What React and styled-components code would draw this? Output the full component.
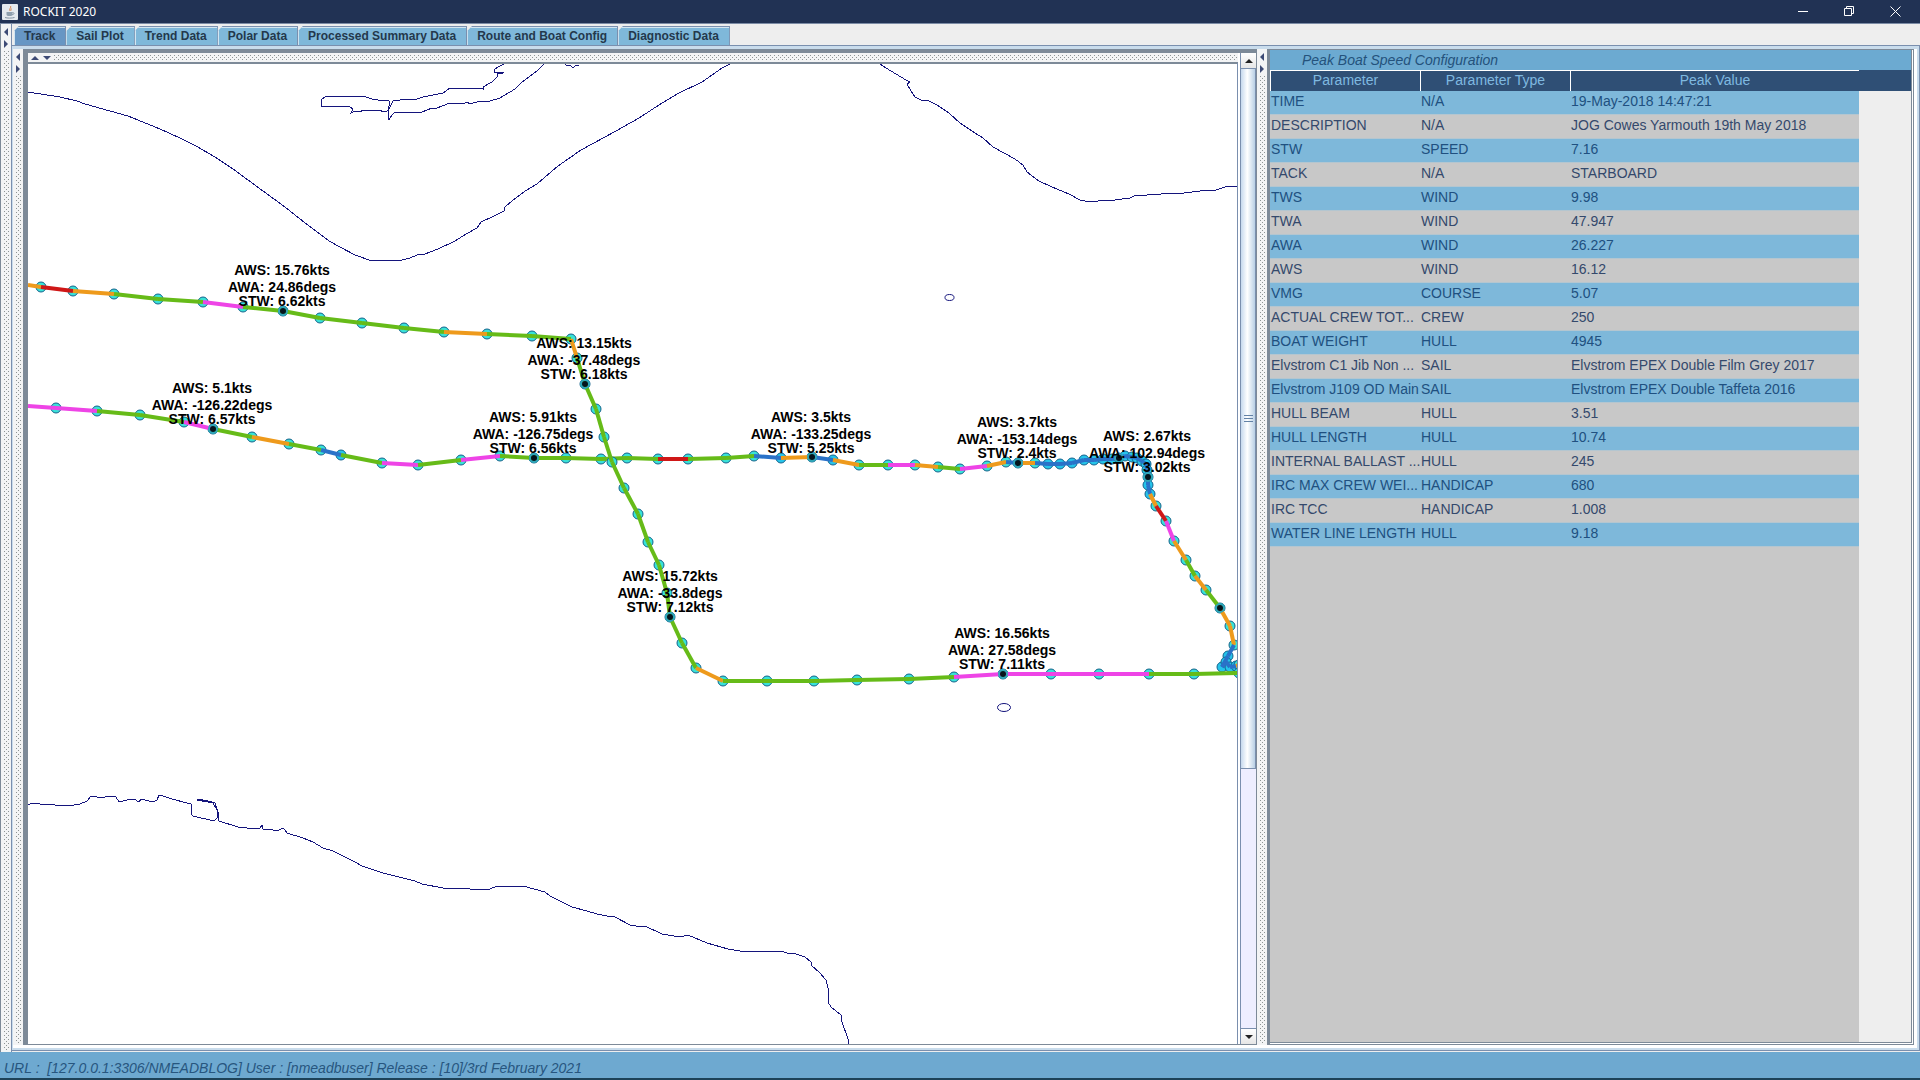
import React, { useState } from "react";
import styled, { createGlobalStyle, css } from "styled-components";

const GlobalStyle = createGlobalStyle`
  * { box-sizing: border-box; }
  body { margin: 0; background: #eeeeee; font-family: "Liberation Sans", Arial, sans-serif; }
  button { margin: 0; padding: 0; border: 0; background: none; font: inherit; color: inherit; }
`;

const EDGE = "#7d8a98";
const STEEL = "#7a8fae";

const Window = styled.div`
  display: flex;
  flex-direction: column;
  height: 100vh;
  min-height: 600px;
  overflow: hidden;
`;

const TitleBar = styled.header`
  display: flex;
  align-items: center;
  height: 24px;
  flex: none;
  padding: 0 2px;
  background: #213254;
  border-bottom: 1px solid #7b8ba5;
  color: #ffffff;
`;

const AppTitle = styled.h1`
  flex: 1;
  margin: 0 0 0 5px;
  font: 400 12px/20px "Noto Sans", "Open Sans", sans-serif;
`;

const WindowButton = styled.button`
  display: flex;
  align-items: center;
  justify-content: center;
  width: 46px;
  height: 20px;
`;

const Body = styled.div`
  display: flex;
  flex: 1;
  min-height: 0;
  border-left: 1px solid ${EDGE};
`;

const dots = css`
  background-image: conic-gradient(at 1px 1px, transparent 75%, #8d9494 0),
    conic-gradient(at 1px 1px, transparent 75%, #8d9494 0);
  background-size: 4px 4px;
  background-position: 0 0, 2px 2px;
`;

const Splitter = styled.div`
  display: flex;
  flex: none;
  gap: 2px;
  flex-direction: ${(p) => (p.$horizontal ? "row" : "column")};
  ${(p) => (p.$horizontal ? "height: 9px; padding: 0 0 0 2px;" : "width: 10px; padding: 3px 0 2px;")}
  align-items: center;
  background: #f3f4f5;
  &::after {
    content: "";
    flex: 1;
    ${(p) => (p.$horizontal ? "height: 5px;" : "width: 5px;")}
    ${dots}
  }
`;

const ArrowButton = styled.button`
  display: flex;
  flex: none;
  align-items: center;
  justify-content: center;
  width: 10px;
  height: 10px;
`;

const Main = styled.main`
  display: flex;
  flex-direction: column;
  flex: 1;
  min-width: 0;
  border-left: 1px solid ${STEEL};
`;

const TabList = styled.div`
  display: flex;
  flex: none;
  height: 21px;
  padding: 2px 0 0 2px;
  background: #eeeeee;
`;

const Tab = styled.button`
  height: 19px;
  padding: 0 10px;
  border-top: 1px solid ${STEEL};
  border-right: 1px solid ${STEEL};
  box-shadow: inset 1px 1px 0 #d3e6f2;
  background: ${(p) => (p.$selected ? "#6796c4" : "#7fb8da")};
  clip-path: polygon(0 5px, 5px 0, 100% 0, 100% 100%, 0 100%);
  color: #24384c;
  font-size: 12px;
  font-weight: 700;
  line-height: 18px;
  white-space: nowrap;
`;

const TabPanel = styled.section`
  display: flex;
  flex: 1;
  min-height: 0;
  border-top: 1px solid ${STEEL};
  border-right: 1px solid ${STEEL};
  border-bottom: 1px solid ${STEEL};
  background: #ffffff;
  box-shadow: inset 0 3px 0 #c9dcec, inset -2px -2px 0 #c9dcec, inset 1px 0 0 #c9dcec;
  padding: 3px 5px 5px 1px;
  margin-bottom: 1px;
`;

const MapPane = styled.div`
  display: flex;
  flex: 1;
  min-width: 0;
  border: solid ${EDGE};
  border-width: 4px 1px 1px 5px;
`;

const MapColumn = styled.div`
  display: flex;
  flex-direction: column;
  flex: 1;
  min-width: 0;
`;

const MapView = styled.div`
  flex: 1;
  min-height: 0;
  border-top: 2px solid ${EDGE};
  border-right: 1px solid ${STEEL};
  background: #ffffff;
  overflow: hidden;
  svg { display: block; width: 100%; height: 100%; }
`;

const Reading = styled.text`
  font: 700 14px "Liberation Sans", Arial, sans-serif;
  text-anchor: middle;
  fill: #000000;
`;

const ScrollBar = styled.div`
  display: flex;
  flex-direction: column;
  flex: none;
  width: 16px;
  margin-left: 2px;
  border-left: 1px solid ${STEEL};
`;

const ScrollButton = styled.button`
  display: flex;
  align-items: center;
  justify-content: center;
  flex: none;
  height: 15px;
  background: linear-gradient(#ffffff, #e6e6e6);
`;

const Thumb = styled.button`
  display: flex;
  flex-direction: column;
  align-items: center;
  justify-content: center;
  gap: 2px;
  flex: 70;
  border: 1px solid ${STEEL};
  border-left: 0;
  background: linear-gradient(90deg, #c6d9ee, #ffffff 45%, #b8cfe5);
`;

const GripLine = styled.span`
  width: 9px;
  height: 1px;
  background: #6382a6;
`;

const Track = styled.div`
  flex: 26;
  background: #eeeeff;
  border-bottom: 1px solid ${STEEL};
`;

const SidePane = styled.aside`
  display: flex;
  flex: none;
  width: 647px;
  border: solid ${EDGE};
  border-width: 1px 1px 1px 3px;
`;

const SideFrame = styled.div`
  display: flex;
  flex-direction: column;
  flex: 1;
  min-width: 0;
  margin: 0 1px 1px 0;
  border: solid ${EDGE};
  border-width: 0 1px 1px 0;
`;

const SideTitle = styled.h2`
  flex: none;
  height: 20px;
  margin: 0;
  padding-left: 32px;
  background: #6caad1;
  color: #24527c;
  font-size: 14px;
  font-style: italic;
  font-weight: 400;
  line-height: 20px;
`;

const TableArea = styled.div`
  display: flex;
  flex: 1;
  min-height: 0;
`;

const TableHolder = styled.div`
  flex: 1;
  min-width: 0;
  background: #c8c8c8;
`;

const Gutter = styled.div`
  width: 52px;
  background: #eeeeee;
  &::before {
    content: "";
    display: block;
    height: 21px;
    background: #2f4f75;
  }
`;

const Table = styled.table`
  width: 100%;
  table-layout: fixed;
  border-collapse: separate;
  border-spacing: 0;
  font-size: 14px;
`;

const HeadCell = styled.th`
  width: ${(p) => (p.$wide ? "auto" : "150px")};
  height: 21px;
  padding: 0 0 2px;
  border-top: 1px solid #ffffff;
  border-left: 1px solid #ffffff;
  background: #2f4f75;
  color: #7fb9e0;
  font-weight: 400;
  line-height: 18px;
`;

const Row = styled.tr`
  background: ${(p) => (p.$blue ? "#7eb8da" : "#c8c8c8")};
  color: ${(p) => (p.$blue ? "#205080" : "#34496c")};
`;

const Cell = styled.td`
  height: 24px;
  padding: 0 0 2px 1px;
  border-bottom: 1px solid #b4c6d0;
  line-height: 21px;
  white-space: nowrap;
  overflow: hidden;
`;

const StatusBar = styled.footer`
  flex: none;
  height: 28px;
  padding-left: 4px;
  border-bottom: 2px solid #1d4258;
  background: #6ea9d0;
  color: #27567f;
  font-size: 14px;
  font-style: italic;
  line-height: 33px;
  white-space: pre;
`;

const TABS = ["Track", "Sail Plot", "Trend Data", "Polar Data", "Processed Summary Data", "Route and Boat Config", "Diagnostic Data"];

const ROWS = [
  ["TIME", "N/A", "19-May-2018 14:47:21"],
  ["DESCRIPTION", "N/A", "JOG Cowes Yarmouth 19th May 2018"],
  ["STW", "SPEED", "7.16"],
  ["TACK", "N/A", "STARBOARD"],
  ["TWS", "WIND", "9.98"],
  ["TWA", "WIND", "47.947"],
  ["AWA", "WIND", "26.227"],
  ["AWS", "WIND", "16.12"],
  ["VMG", "COURSE", "5.07"],
  ["ACTUAL CREW TOT...", "CREW", "250"],
  ["BOAT WEIGHT", "HULL", "4945"],
  ["Elvstrom C1 Jib Non ...", "SAIL", "Elvstrom EPEX Double Film Grey 2017"],
  ["Elvstrom J109 OD Main", "SAIL", "Elvstrom EPEX Double Taffeta 2016"],
  ["HULL BEAM", "HULL", "3.51"],
  ["HULL LENGTH", "HULL", "10.74"],
  ["INTERNAL BALLAST ...", "HULL", "245"],
  ["IRC MAX CREW WEI...", "HANDICAP", "680"],
  ["IRC TCC", "HANDICAP", "1.008"],
  ["WATER LINE LENGTH", "HULL", "9.18"],
];

const COAST = [
  "28,92 47,95 60,97 77,101 85,104 110,111 128,116 160,129 180,138 196,146 215,157 233,169 263,191 285,207 300,219 316,231 329,241 340,247 355,255 369,260 402,260 410,258 417,255 425,254 438,249 455,241 466,234 477,228 481,222 492,217 504,211 505,207 512,201 525,191 537,184 558,166 581,150 616,131 639,118 659,105 679,93 702,82 722,68 730,64",
  "504,64 498,67 494,70 494,72 504,72 503,73 497,74 498,76 492,82 483,87 483,89 475,88 450,88 443,93 423,97 417,99 400,100 393,101 390,107 388,110 389,120 392,115 395,112 400,112 422,112 432,108 437,108 450,103 465,103 467,102 470,104 480,101 490,101 500,98 515,89 522,82 525,80 537,71 544,64",
  "388,110 386,112 377,110 369,111 363,110 360,112 355,111 351,113 353,109 349,106 328,106 321,107 321,100 325,97 334,96 363,96 372,99 378,100 388,100 390,102 388,110",
  "565,64 567,66 570,65 573,68 576,65 579,65",
  "880,64 886,68 891,71 906,80 910,82 907,84 911,91 915,97 923,101 927,100 937,105 949,113 960,123 975,133 983,138 993,147 1015,159 1023,165 1027,172 1039,181 1052,187 1069,194 1080,200 1085,201 1098,201 1115,200 1130,198 1134,196 1161,194 1184,193 1200,191 1216,190 1225,187 1238,186",
  "28,805 32,803 40,804 55,805 68,806 80,804 87,801 91,796 97,797 102,798 108,796 116,797 119,802 127,800 134,799 139,802 141,799 153,802 157,800 159,795 163,796 172,799 187,803 191,804 191,814 193,816 214,821 217,818 217,810 213,803 197,800 197,799 208,801 215,803 218,812 219,821 238,827 256,829 260,828 262,825 263,829 273,830 279,830 283,828 285,830 287,833 303,838 313,842 323,848 333,851 347,858 355,862 362,866 383,873 415,881 422,884 443,888 467,888 473,890 490,889 497,886 523,886 545,892 550,896 572,907 587,911 597,914 607,916 615,917 630,925 642,927 645,926 662,934 680,937 688,935 707,943 728,949 740,951 780,951 791,954 793,953 805,957 811,962 812,966 819,972 826,980 828,988 828,1002 831,1007 841,1015 842,1022 848,1039 848,1044",
];

const LEG_COLORS = { g: "#66bb18", o: "#ee9a1c", r: "#cf1717", m: "#ee44e6", b: "#2a72c8" };

// Each fix is [x, y, colour of the leg that leads to it, sampled?].
const OUTBOUND = [
  [28, 285], [41, 287, "o"], [73, 291, "r"], [114, 294, "o"], [158, 299, "g"], [203, 302, "g"], [243, 307, "m"],
  [283, 311, "g", 1], [320, 318, "g"], [362, 323, "g"], [404, 328, "g"], [444, 332, "g"], [487, 334, "o"],
  [532, 336, "g"], [571, 339, "g"], [577, 358, "o"], [585, 384, "g", 1], [596, 409, "g"], [604, 437, "g"],
  [612, 462, "g"], [624, 488, "g"], [638, 514, "g"], [648, 542, "g"], [659, 565, "g"], [667, 593, "g"],
  [670, 617, "g", 1], [682, 643, "g"], [696, 668, "g"], [723, 681, "o"], [767, 681, "g"], [814, 681, "g"],
  [857, 680, "g"], [909, 679, "g"], [954, 677, "g"], [1003, 674, "m", 1], [1051, 674, "m"], [1099, 674, "m"],
  [1149, 674, "m"], [1194, 674, "g"], [1239, 673, "g"],
];

const INBOUND = [
  [28, 406], [56, 408, "m"], [97, 411, "m"], [140, 415, "g"], [184, 422, "g"], [213, 429, "m", 1], [252, 437, "g"],
  [289, 444, "o"], [321, 450, "g"], [341, 455, "b"], [382, 463, "g"], [418, 465, "m"], [461, 460, "g"],
  [500, 456, "m"], [534, 458, "g", 1], [566, 458, "g"], [601, 459, "g"], [627, 458, "g"], [658, 459, "g"],
  [688, 459, "r"], [726, 458, "g"], [754, 456, "g"], [781, 458, "b"], [812, 457, "o", 1], [833, 460, "b"],
  [859, 465, "o"], [888, 465, "g"], [915, 465, "m"], [938, 467, "o"], [960, 469, "g"], [987, 466, "m"],
  [1006, 462, "o"], [1018, 463, "b", 1], [1035, 463, "o"], [1048, 464, "b"], [1060, 464, "b"], [1072, 463, "b"],
  [1084, 460, "b"], [1094, 460, "b"], [1103, 459, "b"], [1112, 459, "b"], [1119, 458, "b", 1], [1125, 456, "b"],
  [1132, 457, "b"], [1137, 458, "b"], [1142, 461, "b"], [1146, 464, "b"], [1147, 470, "b"], [1148, 477, "b", 1],
  [1148, 485, "b"], [1150, 494, "b"], [1156, 506, "o"], [1166, 521, "r"], [1174, 541, "m"], [1186, 560, "o"],
  [1195, 576, "g"], [1206, 590, "o"], [1220, 608, "g", 1], [1230, 626, "o"], [1234, 645, "o"], [1228, 656, "b"],
  [1222, 667, "b"], [1226, 662, "b"], [1230, 667, "b"], [1236, 666, "b"], [1239, 665, "o"],
];

const READINGS = [
  [282, 311, "15.76", "24.86", "6.62"],
  [212, 429, "5.1", "-126.22", "6.57"],
  [584, 384, "13.15", "-37.48", "6.18"],
  [533, 458, "5.91", "-126.75", "6.56"],
  [811, 458, "3.5", "-133.25", "5.25"],
  [1017, 463, "3.7", "-153.14", "2.4"],
  [1147, 477, "2.67", "102.94", "3.02"],
  [670, 617, "15.72", "-33.8", "7.12"],
  [1002, 674, "16.56", "27.58", "7.11"],
];

function BoatTrack({ fixes }) {
  return (
    <g>
      {fixes.slice(1).map(([x, y, leg], i) => (
        <circle key={i} cx={x} cy={y} r="5" fill={leg === "b" ? "#25c4ea" : "#38e2d8"} stroke="#14628c" />
      ))}
      {fixes.slice(1).map(([x, y, leg], i) => (
        <line key={i} x1={fixes[i][0]} y1={fixes[i][1]} x2={x} y2={y} stroke={LEG_COLORS[leg]} strokeWidth="4" />
      ))}
      {fixes.filter((f) => f[3]).map(([x, y]) => (
        <g key={x}>
          <circle cx={x} cy={y} r="4" fill="none" stroke="#2fa6b8" strokeWidth="2" />
          <circle cx={x} cy={y} r="3" fill="#04141c" />
        </g>
      ))}
    </g>
  );
}

function Arrow({ dir, size = 8, fill = "#3d4a75" }) {
  const shapes = { left: "6,0 6,8 2,4", right: "2,0 2,8 6,4", up: "0,6 8,6 4,2", down: "0,2 8,2 4,6" };
  return (
    <svg width={size} height={size} viewBox="0 0 8 8" aria-hidden="true">
      <polygon points={shapes[dir]} fill={fill} />
    </svg>
  );
}

function Divider({ horizontal }) {
  const [a, b] = horizontal ? ["up", "down"] : ["left", "right"];
  return (
    <Splitter $horizontal={horizontal}>
      <ArrowButton aria-label={`Collapse ${a}`}><Arrow dir={a} /></ArrowButton>
      <ArrowButton aria-label={`Collapse ${b}`}><Arrow dir={b} /></ArrowButton>
    </Splitter>
  );
}

function JavaIcon() {
  return (
    <svg width="16" height="16" viewBox="0 0 16 16" aria-hidden="true">
      <rect width="16" height="16" rx="1" fill="#e4e9ee" />
      <path d="M8.5 2c1.500 1.500-2 2.500-.5 5M10 4.500c-1 .7-1.500 1.200-1 2.300" stroke="#d58a5a" fill="none" />
      <path d="M4.500 8h6v2.500c0 1-1 1.500-3 1.500s-3-.5-3-1.500z" fill="#8e9fae" />
      <path d="M10.500 8.500c2 0 2 2-.3 2.200M3 13.500c2 .8 7 .8 9.500 0" stroke="#8393a3" fill="none" />
    </svg>
  );
}

export default function App() {
  const [tab, setTab] = useState("Track");
  return (
    <Window>
      <GlobalStyle />
      <TitleBar>
        <JavaIcon />
        <AppTitle>ROCKIT 2020</AppTitle>
        <WindowButton aria-label="Minimize">
          <svg width="11" height="11"><path d="M0 5.500h10" stroke="#fff" /></svg>
        </WindowButton>
        <WindowButton aria-label="Restore">
          <svg width="11" height="11" fill="none" stroke="#fff"><path d="M.5 2.500h7v7h-7zM2.500 2.500v-2h7v7h-2" /></svg>
        </WindowButton>
        <WindowButton aria-label="Close">
          <svg width="11" height="11" stroke="#fff"><path d="M.5.500l10 10M10.500.500l-10 10" /></svg>
        </WindowButton>
      </TitleBar>
      <Body>
        <Divider />
        <Main>
          <TabList role="tablist">
            {TABS.map((name) => (
              <Tab key={name} role="tab" aria-selected={tab === name} $selected={tab === name} onClick={() => setTab(name)}>
                {name}
              </Tab>
            ))}
          </TabList>
          <TabPanel role="tabpanel">
            <Divider />
            <MapPane>
              <MapColumn>
                <Divider horizontal />
                <MapView>
                  <svg viewBox="28 64 1209 980" preserveAspectRatio="xMinYMin meet" role="img" aria-label="Boat track">
                    <g fill="none" stroke="#14147c" shapeRendering="crispEdges">
                      {COAST.map((points, i) => <polyline key={i} points={points} />)}
                    </g>
                    <g fill="none" stroke="#14147c">
                      <ellipse cx="949.5" cy="297.5" rx="4.5" ry="3" />
                      <ellipse cx="1004" cy="707.5" rx="6.5" ry="4" />
                    </g>
                    <BoatTrack fixes={INBOUND} />
                    <BoatTrack fixes={OUTBOUND} />
                    {READINGS.map(([x, y, aws, awa, stw]) => (
                      <g key={x}>
                        <Reading x={x} y={y - 36}>{`AWS: ${aws}kts`}</Reading>
                        <Reading x={x} y={y - 19}>{`AWA: ${awa}degs`}</Reading>
                        <Reading x={x} y={y - 5}>{`STW: ${stw}kts`}</Reading>
                      </g>
                    ))}
                  </svg>
                </MapView>
              </MapColumn>
              <ScrollBar>
                <ScrollButton aria-label="Scroll up"><Arrow dir="up" fill="#222" /></ScrollButton>
                <Thumb aria-label="Scroll position"><GripLine /><GripLine /><GripLine /></Thumb>
                <Track />
                <ScrollButton aria-label="Scroll down"><Arrow dir="down" fill="#222" /></ScrollButton>
              </ScrollBar>
            </MapPane>
            <Divider />
            <SidePane>
              <SideFrame>
                <SideTitle>Peak Boat Speed Configuration</SideTitle>
                <TableArea>
                  <TableHolder>
                    <Table>
                      <thead>
                        <tr>
                          <HeadCell>Parameter</HeadCell>
                          <HeadCell>Parameter Type</HeadCell>
                          <HeadCell $wide>Peak Value</HeadCell>
                        </tr>
                      </thead>
                      <tbody>
                        {ROWS.map((cells, i) => (
                          <Row key={cells[0]} $blue={i % 2 === 0}>
                            {cells.map((c, j) => <Cell key={j}>{c}</Cell>)}
                          </Row>
                        ))}
                      </tbody>
                    </Table>
                  </TableHolder>
                  <Gutter />
                </TableArea>
              </SideFrame>
            </SidePane>
          </TabPanel>
        </Main>
      </Body>
      <StatusBar>{"URL :  [127.0.0.1:3306/NMEADBLOG] User : [nmeadbuser] Release : [10]/3rd February 2021"}</StatusBar>
    </Window>
  );
}
